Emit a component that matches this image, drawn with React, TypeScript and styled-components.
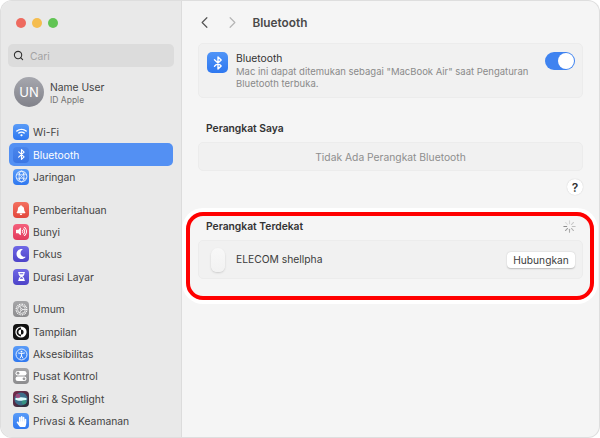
import React from 'react'
import styled, { createGlobalStyle } from 'styled-components'
import { FaBell, FaHandPaper, FaHourglassHalf, FaMoon, FaVolumeUp, FaWifi } from 'react-icons/fa'
import { FiChevronLeft, FiChevronRight, FiSearch } from 'react-icons/fi'

const GlobalStyle = createGlobalStyle`
  html, body { margin: 0; padding: 0; background: #fff; }
  * { box-sizing: border-box; }
  body { font-family: Inter, "Liberation Sans", sans-serif; -webkit-font-smoothing: antialiased; }
`

const BluetoothGlyph = ({ size = 14, color = '#fff' }: { size?: number; color?: string }) => (
  <svg width={size} height={size} viewBox="0 0 16 16" fill="none" stroke={color} strokeWidth="1.4" strokeLinejoin="round" strokeLinecap="round">
    <path d="M4.5 4.8 11.2 10.9 8 14V2l3.2 3.1L4.5 11.2" />
  </svg>
)

const GlobeGlyph = () => (
  <svg width="13" height="13" viewBox="0 0 14 14" fill="none" stroke="#fff" strokeWidth="0.9">
    <circle cx="7" cy="7" r="5.8" />
    <ellipse cx="7" cy="7" rx="2.6" ry="5.8" />
    <path d="M1.4 5h11.2M1.4 9h11.2M3 2.5l8 9M11 2.5l-8 9" strokeWidth="0.6" />
  </svg>
)

const GearGlyph = () => (
  <svg width="13" height="13" viewBox="0 0 14 14" fill="none" stroke="#fff">
    <circle cx="7" cy="7" r="5.7" strokeWidth="1.4" strokeDasharray="1 0.8" />
    <circle cx="7" cy="7" r="4.2" strokeWidth="0.8" />
    <circle cx="7" cy="7" r="1" strokeWidth="0.8" />
    <path d="M8 7h3.2M6.5 6.1 4.9 3.4M6.5 7.9 4.9 10.6" strokeWidth="0.8" />
  </svg>
)

const AppearanceGlyph = () => (
  <svg width="12" height="12" viewBox="0 0 12 12">
    <circle cx="6" cy="6" r="5.6" fill="#fff" />
    <path d="M6 1.6a4.4 4.4 0 0 0 0 8.8z" fill="#111" />
    <circle cx="6" cy="6" r="2.6" fill="#111" />
    <path d="M6 3.4a2.6 2.6 0 0 0 0 5.2z" fill="#fff" />
  </svg>
)

const AccessGlyph = () => (
  <svg width="13" height="13" viewBox="0 0 14 14" fill="none" stroke="#fff">
    <circle cx="7" cy="7" r="5.9" strokeWidth="0.9" />
    <circle cx="7" cy="3.9" r="1" fill="#fff" stroke="none" />
    <path d="M3.8 5.4 7 6l3.2-.6M7 6v2.4M7 8.4 5.4 11M7 8.4 8.6 11" strokeWidth="1" strokeLinecap="round" />
  </svg>
)

const ControlGlyph = () => (
  <svg width="12" height="12" viewBox="0 0 12 12">
    <rect x="0.5" y="1" width="11" height="4.4" rx="2.2" fill="#fff" />
    <circle cx="3" cy="3.2" r="1.4" fill="#9a9a9c" />
    <rect x="0.5" y="6.6" width="11" height="4.4" rx="2.2" fill="#fff" />
    <circle cx="9" cy="8.8" r="1.4" fill="#9a9a9c" />
  </svg>
)

const SiriGlyph = () => (
  <svg width="14" height="14" viewBox="0 0 12 12">
    <circle cx="6" cy="6" r="5.6" fill="#3c6f8c" />
    <ellipse cx="6" cy="6" rx="5" ry="1.6" fill="#dff" />
    <circle cx="3.4" cy="3.4" r="2" fill="#c23c78" opacity="0.7" />
    <circle cx="8.6" cy="8.8" r="2" fill="#35a27e" opacity="0.7" />
  </svg>
)

const blue = 'linear-gradient(#5a9cf8, #2f78f0)'
const indigo = 'linear-gradient(#7068e6, #4d43c8)'
const grey = 'linear-gradient(#a6a6a8, #8c8c8e)'

const groups = [
  [
    { name: 'Wi-Fi', bg: blue, icon: <FaWifi size={11} color="#fff" /> },
    { name: 'Bluetooth', bg: 'linear-gradient(#4a86ec, #3a76e4)', icon: <BluetoothGlyph size={13} />, active: true },
    { name: 'Jaringan', bg: blue, icon: <GlobeGlyph /> },
  ],
  [
    { name: 'Pemberitahuan', bg: 'linear-gradient(#f4705f, #e2463c)', icon: <FaBell size={10} color="#fff" /> },
    { name: 'Bunyi', bg: 'linear-gradient(#f4607c, #e23a5c)', icon: <FaVolumeUp size={11} color="#fff" /> },
    { name: 'Fokus', bg: indigo, icon: <FaMoon size={10} color="#fff" /> },
    { name: 'Durasi Layar', bg: indigo, icon: <FaHourglassHalf size={9} color="#fff" /> },
  ],
  [
    { name: 'Umum', bg: grey, icon: <GearGlyph /> },
    { name: 'Tampilan', bg: '#111', icon: <AppearanceGlyph /> },
    { name: 'Aksesibilitas', bg: blue, icon: <AccessGlyph /> },
    { name: 'Pusat Kontrol', bg: grey, icon: <ControlGlyph /> },
    { name: 'Siri & Spotlight', bg: 'linear-gradient(135deg, #7a2a4c, #23303c)', icon: <SiriGlyph /> },
    { name: 'Privasi & Keamanan', bg: blue, icon: <FaHandPaper size={11} color="#fff" /> },
  ],
]

const App = () => (
  <Screen>
    <GlobalStyle />
    <MacWindow>
      <Sidebar>
        <TrafficLights>
          <Light $color="#ee6a5f" />
          <Light $color="#f5bd4f" />
          <Light $color="#61c454" />
        </TrafficLights>
        <SearchBox>
          <FiSearch size={11} color="#333" strokeWidth={2.4} />
          <SearchHint>Cari</SearchHint>
        </SearchBox>
        <Profile>
          <Avatar>UN</Avatar>
          <ProfileText>
            <ProfileName>Name User</ProfileName>
            <ProfileSub>ID Apple</ProfileSub>
          </ProfileText>
        </Profile>
        {groups.map((items) => (
          <NavGroup key={items[0].name}>
            {items.map((item) => (
              <NavRow key={item.name} $active={item.active}>
                <NavIcon $bg={item.bg}>{item.icon}</NavIcon>
                {item.name}
              </NavRow>
            ))}
          </NavGroup>
        ))}
      </Sidebar>

      <Main>
        <Header>
          <NavArrow><FiChevronLeft size={19} strokeWidth={1.5} color="#555" /></NavArrow>
          <NavArrow><FiChevronRight size={19} strokeWidth={1.5} color="#b5b5b5" /></NavArrow>
          <PageTitle>Bluetooth</PageTitle>
        </Header>

        <Card>
          <BluetoothRow>
            <BigIcon><BluetoothGlyph size={16} /></BigIcon>
            <BluetoothText>
              <CardTitle>Bluetooth</CardTitle>
              <CardDesc>Mac ini dapat ditemukan sebagai "MacBook Air" saat Pengaturan Bluetooth terbuka.</CardDesc>
            </BluetoothText>
            <Toggle><ToggleKnob /></Toggle>
          </BluetoothRow>
        </Card>

        <SectionTitle>Perangkat Saya</SectionTitle>
        <EmptyCard>Tidak Ada Perangkat Bluetooth</EmptyCard>
        <HelpRow><HelpButton>?</HelpButton></HelpRow>

        <NearbyHeader>
          <NearbyTitle>Perangkat Terdekat</NearbyTitle>
          <svg width="13" height="13" viewBox="0 0 12 12" stroke="#8a8a8a" strokeWidth="1" strokeLinecap="round">
            <path d="M6 .8v2.6" opacity="0.3" />
            <path d="M9.7 2.3 7.8 4.2" opacity="0.4" />
            <path d="M11.2 6H8.6" opacity="0.5" />
            <path d="M9.7 9.7 7.8 7.8" opacity="0.6" />
            <path d="M6 11.2V8.6" opacity="0.7" />
            <path d="M2.3 9.7l1.9-1.9" opacity="0.8" />
            <path d="M.8 6h2.6" />
            <path d="M2.3 2.3l1.9 1.9" opacity="0.2" />
          </svg>
        </NearbyHeader>
        <DeviceCard>
          <MouseShape />
          <DeviceName>ELECOM shellpha</DeviceName>
          <ConnectButton>Hubungkan</ConnectButton>
        </DeviceCard>
      </Main>
      <Highlight />
    </MacWindow>
  </Screen>
)

const Screen = styled.div`
  width: 600px;
  height: 438px;
  padding: 1px;
  background: #fff;
  overflow: hidden;
`

const MacWindow = styled.div`
  position: relative;
  display: flex;
  width: 598px;
  height: 436px;
  border-radius: 11px;
  overflow: hidden;
  background: #f5f5f5;
  box-shadow: 0 0 0 1px #dedede;
`

const Sidebar = styled.aside`
  width: 181px;
  flex-shrink: 0;
  padding: 0 8px;
  background: #e9e9e9;
  border-right: 1px solid #dcdcdc;
`

const TrafficLights = styled.div`
  display: flex;
  gap: 6px;
  padding: 17px 0 0 7px;
  height: 43px;
`

const Light = styled.span<{ $color: string }>`
  width: 10px;
  height: 10px;
  border-radius: 50%;
  background: ${(p) => p.$color};
`

const SearchBox = styled.div`
  display: flex;
  align-items: center;
  gap: 6px;
  height: 23px;
  margin: 0 -1px;
  padding-left: 5px;
  border-radius: 5px;
  background: #dcdcdc;
`

const SearchHint = styled.span`
  font-size: 10.3px;
  color: #a3a3a3;
`

const Profile = styled.div`
  display: flex;
  align-items: center;
  gap: 6px;
  height: 50px;
  margin-bottom: 4px;
  padding-left: 5px;
`

const ProfileText = styled.div`
  padding-top: 4px;
`

const Avatar = styled.div`
  display: flex;
  align-items: center;
  justify-content: center;
  width: 30px;
  height: 30px;
  border-radius: 50%;
  background: linear-gradient(#a6a7ae, #81828a);
  color: #fff;
  font-size: 13px;
`

const ProfileName = styled.div`
  font-size: 10.3px;
  color: #444;
  line-height: 13px;
`

const ProfileSub = styled.div`
  font-size: 8.5px;
  color: #747474;
  line-height: 13px;
`

const NavGroup = styled.div`
  display: flex;
  flex-direction: column;
  margin-bottom: 10.2px;
`

const NavRow = styled.div<{ $active?: boolean }>`
  display: flex;
  align-items: center;
  gap: 4px;
  height: 22.4px;
  padding-left: 4px;
  border-radius: 5px;
  font-size: 10.3px;
  color: ${(p) => (p.$active ? '#fff' : '#444')};
  background: ${(p) => (p.$active ? '#5390f3' : 'transparent')};
`

const NavIcon = styled.span<{ $bg: string }>`
  display: flex;
  align-items: center;
  justify-content: center;
  width: 16px;
  height: 16px;
  border-radius: 4px;
  background: ${(p) => p.$bg};
`

const Main = styled.main`
  flex: 1;
  padding: 0 16px;
`

const Header = styled.header`
  display: flex;
  align-items: center;
  height: 42px;
  margin-left: -3.5px;
  padding-top: 1px;
`

const NavArrow = styled.span`
  display: flex;
  width: 28px;
`

const PageTitle = styled.h1`
  margin: 0 0 0 2px;
  font-size: 11.8px;
  font-weight: 600;
  color: #4a4a4a;
`

const Card = styled.section`
  height: 55px;
  border: 1px solid #ececec;
  border-radius: 5px;
  background: #f1f1f1;
`

const BluetoothRow = styled.div`
  display: flex;
  align-items: flex-start;
  padding: 8px 7px 0 8px;
`

const BigIcon = styled.span`
  display: flex;
  align-items: center;
  justify-content: center;
  flex-shrink: 0;
  width: 21px;
  height: 21px;
  border-radius: 5px;
  background: linear-gradient(#4f94f7, #2f78f0);
`

const BluetoothText = styled.div`
  width: 305px;
  margin-left: 8px;
`

const CardTitle = styled.div`
  font-size: 10.3px;
  line-height: 13px;
  margin-bottom: 1px;
  color: #333;
`

const CardDesc = styled.div`
  font-size: 9.5px;
  line-height: 12px;
  color: #8a8a8a;
`

const Toggle = styled.div`
  display: flex;
  justify-content: flex-end;
  align-items: center;
  flex-shrink: 0;
  width: 30px;
  height: 18px;
  margin-left: auto;
  padding-right: 1px;
  border-radius: 9px;
  background: #3f83f0;
`

const ToggleKnob = styled.span`
  width: 16px;
  height: 16px;
  border-radius: 50%;
  background: #fff;
`

const SectionTitle = styled.h2`
  margin: 23px 0 7px 8px;
  font-size: 10.3px;
  line-height: 14px;
  font-weight: 600;
  color: #333;
`

const EmptyCard = styled.div`
  display: flex;
  align-items: center;
  justify-content: center;
  height: 29px;
  border: 1px solid #ececec;
  border-radius: 5px;
  background: #f1f1f1;
  font-size: 10.3px;
  color: #8e8e8e;
`

const HelpRow = styled.div`
  display: flex;
  justify-content: flex-end;
  padding: 8px 0 0;
`

const HelpButton = styled.span`
  display: flex;
  align-items: center;
  justify-content: center;
  width: 16px;
  height: 16px;
  border-radius: 50%;
  background: #fff;
  box-shadow: 0 0 1px #bbb;
  font-size: 12px;
  font-weight: 600;
  color: #333;
`

const NearbyHeader = styled.div`
  display: flex;
  align-items: center;
  justify-content: space-between;
  margin: 24px 7.5px 7px 8px;
  height: 14px;
`

const NearbyTitle = styled.h2`
  margin: 0;
  font-size: 10.3px;
  font-weight: 600;
  color: #333;
`

const DeviceCard = styled.section`
  display: flex;
  align-items: center;
  height: 39px;
  padding: 0 7px 0 12px;
  border: 1px solid #ececec;
  border-radius: 5px;
  background: #f1f1f1;
`

const MouseShape = styled.span`
  width: 14px;
  height: 24px;
  border-radius: 7px 7px 6px 6px;
  background: linear-gradient(#f8f8f8, #f2f2f2);
  box-shadow: 0 1px 2px #ccc;
`

const DeviceName = styled.span`
  margin-left: 11px;
  padding-bottom: 2px;
  font-size: 10.3px;
  color: #3c3c3c;
`

const ConnectButton = styled.span`
  display: flex;
  align-items: center;
  justify-content: center;
  width: 68px;
  height: 16px;
  margin-left: auto;
  border-radius: 4px;
  background: #fff;
  box-shadow: 0 0.5px 1.5px #bbb;
  font-size: 10.2px;
  color: #3c3c3c;
`

const Highlight = styled.div`
  position: absolute;
  left: 185px;
  top: 211px;
  width: 408px;
  height: 88px;
  border: 4px solid #f00;
  border-radius: 17px;
  box-shadow: 0 0 0 4px #fff;
  pointer-events: none;
`

export default App
